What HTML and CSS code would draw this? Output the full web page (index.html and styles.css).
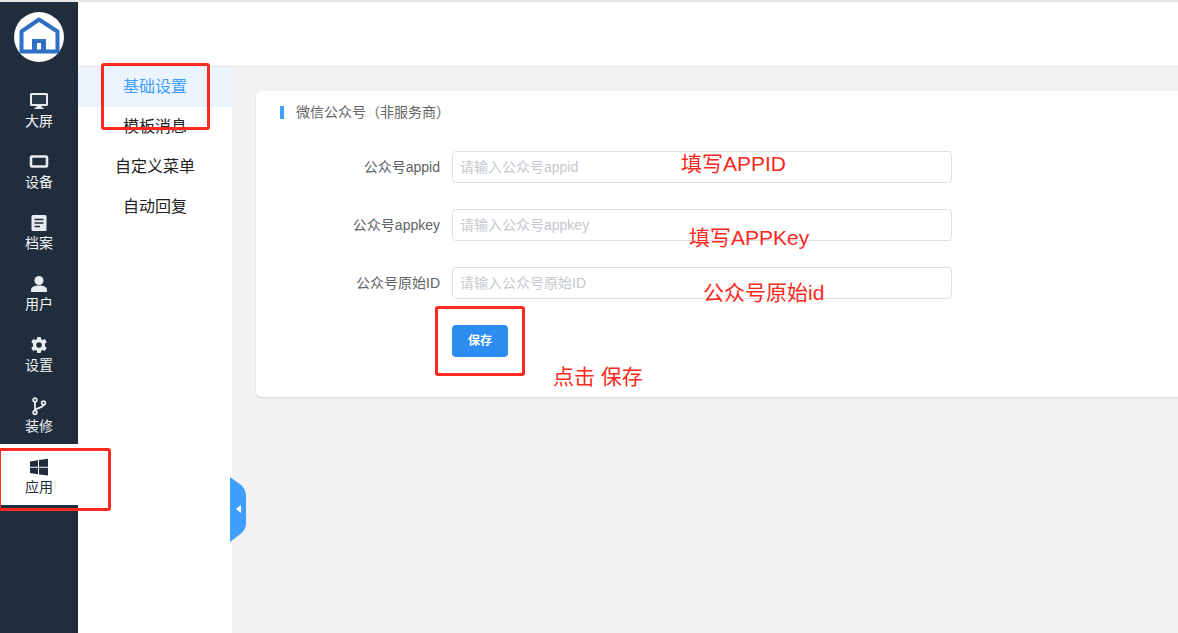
FILE: index.html
```html
<!DOCTYPE html>
<html lang="zh-CN">
<head>
<meta charset="utf-8">
<title>微信公众号</title>
<link rel="stylesheet" href="styles.css">
</head>
<body>
<div class="app">
  <aside class="rail">
    <div class="logo">
      <svg viewBox="0 0 50 50" width="50" height="50">
        <circle cx="25" cy="25" r="25" fill="#fff"/>
        <path d="M25 7.500 L43.500 19.500 V39.500 H7.500 V19.500 Z" fill="none" stroke="#2f6fc4" stroke-width="4" stroke-linejoin="round"/>
        <path d="M18 41 V27 H32 V41 H27 V31 H23 V41 Z" fill="#2f6fc4"/>
      </svg>
    </div>
    <a class="rail-item">
      <svg class="rail-icon" viewBox="0 0 20 20"><path d="M2.500 2 H17.500 A1.500 1.500 0 0 1 19 3.500 V13.500 A1.500 1.500 0 0 1 17.500 15 H2.500 A1.500 1.500 0 0 1 1 13.500 V3.500 A1.500 1.500 0 0 1 2.500 2 Z" fill="#e8ecf0"/><rect x="3" y="4" width="14" height="9" fill="#2b3a4b"/><path d="M7.500 15 H12.500 V16.500 H14.500 V18 H5.500 V16.500 H7.500 Z" fill="#e8ecf0"/></svg>
      <span>大屏</span>
    </a>
    <a class="rail-item">
      <svg class="rail-icon" viewBox="0 0 20 20"><rect x="2" y="4.500" width="16" height="10" rx="1" fill="none" stroke="#e8ecf0" stroke-width="2.600"/></svg>
      <span>设备</span>
    </a>
    <a class="rail-item">
      <svg class="rail-icon" viewBox="0 0 20 20"><rect x="2.500" y="2" width="15" height="16" rx="1.500" fill="#e8ecf0"/><path d="M5.500 6.500 H14.500 M5.500 10 H14.500 M5.500 13.500 H11" stroke="#1f2d3d" stroke-width="1.500"/></svg>
      <span>档案</span>
    </a>
    <a class="rail-item">
      <svg class="rail-icon" viewBox="0 0 20 20"><circle cx="10" cy="6.500" r="4.500" fill="#e8ecf0"/><path d="M2 18 V16 C2 13 5 11.500 10 11.500 C15 11.500 18 13 18 16 V18 Z" fill="#e8ecf0"/></svg>
      <span>用户</span>
    </a>
    <a class="rail-item">
      <svg class="rail-icon" viewBox="0 0 20 20"><path fill="#e8ecf0" fill-rule="evenodd" d="M8.300 2 H11.700 L12.200 4.300 L13.600 5 L15.800 4 L17.700 7 L16 8.700 V11.300 L17.700 13 L15.800 16 L13.600 15 L12.200 15.700 L11.700 18 H8.300 L7.800 15.700 L6.400 15 L4.200 16 L2.300 13 L4 11.300 V8.700 L2.300 7 L4.200 4 L6.400 5 L7.800 4.300 Z M10 7.200 A2.800 2.800 0 1 0 10 12.800 A2.800 2.800 0 1 0 10 7.200 Z"/></svg>
      <span>设置</span>
    </a>
    <a class="rail-item">
      <svg class="rail-icon" viewBox="0 0 20 20"><g fill="none" stroke="#e8ecf0" stroke-width="1.800"><circle cx="6" cy="4" r="1.800"/><circle cx="6" cy="16.500" r="1.800"/><circle cx="14.500" cy="7" r="1.800"/><path d="M6 5.800 V14.700 M14.500 8.800 C14.500 12 7.500 11 6 14.700"/></g></svg>
      <span>装修</span>
    </a>
    <a class="rail-item is-active">
      <svg class="rail-icon" viewBox="0 0 20 20"><path fill="#1f2d3d" d="M1 4.500 L9 3.300 V9.800 H1 Z M10 3.100 L19 1.800 V9.800 H10 Z M1 10.800 H9 V17.200 L1 16.100 Z M10 10.800 H19 V18.600 L10 17.400 Z"/></svg>
      <span>应用</span>
    </a>
  </aside>

  <div class="content">
    <header class="topbar"></header>
    <div class="below">
      <nav class="submenu">
        <a class="sub-item is-current">基础设置</a>
        <a class="sub-item">模板消息</a>
        <a class="sub-item">自定义菜单</a>
        <a class="sub-item">自动回复</a>
        <div class="collapse"><span class="collapse-arrow"></span></div>
      </nav>
      <main class="main">
        <section class="card">
          <h2 class="card-title">微信公众号（非服务商）</h2>
          <form class="form">
            <div class="row">
              <label class="label">公众号appid</label>
              <input class="input" placeholder="请输入公众号appid">
            </div>
            <div class="row">
              <label class="label">公众号appkey</label>
              <input class="input" placeholder="请输入公众号appkey">
            </div>
            <div class="row">
              <label class="label">公众号原始ID</label>
              <input class="input" placeholder="请输入公众号原始ID">
            </div>
            <div class="row">
              <button class="save" type="button">保存</button>
            </div>
          </form>
        </section>
      </main>
    </div>
  </div>
</div>

<div class="mark mark-menu"></div>
<div class="mark mark-app"></div>
<div class="mark mark-save"></div>
<div class="note note-appid">填写APPID</div>
<div class="note note-appkey">填写APPKey</div>
<div class="note note-origin">公众号原始id</div>
<div class="note note-save">点击 保存</div>
</body>
</html>
```

FILE: styles.css
```css
* { box-sizing: border-box; }
html, body { margin: 0; height: 100%; overflow: hidden; }
body {
  position: relative;
  font-family: "Liberation Sans", "Noto Sans CJK SC", sans-serif;
  color: #333;
  background: #f2f2f2;
}
.app {
  display: flex;
  height: 633px;
  border-top: 2px solid #e6e6e6;
}
.rail {
  width: 78px;
  flex: none;
  background: #1f2d3d;
  display: flex;
  flex-direction: column;
}
.logo {
  height: 76px;
  padding-top: 10px;
  display: flex;
  justify-content: center;
}
.rail-item {
  height: 61px;
  padding-top: 13px;
  display: flex;
  flex-direction: column;
  align-items: center;
  font-size: 14px;
  line-height: 20px;
  color: #f2f4f6;
}
.rail-icon { width: 20px; height: 20px; display: block; }
.rail-item.is-active { background: #fff; color: #1f2d3d; }
.content { flex: 1; min-width: 0; display: flex; flex-direction: column; }
.topbar { height: 65px; flex: none; background: #fff; border-bottom: 1px solid #e6e6e6; }
.below { flex: 1; display: flex; min-height: 0; }
.submenu { width: 154px; flex: none; background: #fff; position: relative; }
.sub-item {
  display: block;
  height: 40px;
  line-height: 40px;
  text-align: center;
  font-size: 16px;
  color: #222;
}
.sub-item.is-current { background: #ecf5ff; color: #409eff; }
.collapse {
  position: absolute;
  left: 152px;
  top: 410px;
  width: 16px;
  height: 65px;
  padding-bottom: 1px;
  background: #409eff;
  clip-path: polygon(0 0, 73% 13%, 90% 19%, 100% 27%, 100% 74%, 90% 81%, 73% 86%, 0 100%);
  display: flex;
  align-items: center;
  justify-content: center;
}
.collapse-arrow {
  width: 0;
  height: 0;
  border-top: 4px solid transparent;
  border-bottom: 4px solid transparent;
  border-right: 5px solid #fff;
}
.main { flex: 1; min-width: 0; padding: 24px 0 0 24px; }
.card {
  height: 306px;
  background: #fff;
  border-radius: 5px 0 0 5px;
  box-shadow: 0 1px 2px rgba(0, 0, 0, .14);
  padding: 15px 0 0 24px;
}
.card-title {
  margin: 0;
  font-size: 14px;
  font-weight: 400;
  line-height: 13px;
  height: 13px;
  color: #666;
  border-left: 4px solid #409eff;
  padding-left: 12px;
}
.form { margin-top: 32px; display: flex; flex-direction: column; gap: 26px; }
.row { display: flex; align-items: center; gap: 12px; height: 32px; }
.label { width: 160px; text-align: right; font-size: 14px; color: #606266; padding-bottom: 2px; }
.input {
  width: 500px;
  height: 32px;
  border: 1px solid #dcdfe6;
  border-radius: 4px;
  padding: 0 7px;
  font: 14px "Liberation Sans", "Noto Sans CJK SC", sans-serif;
  color: #606266;
  background: #fff;
  outline: none;
}
.input::placeholder { color: #c5c8ce; opacity: 1; }
.save {
  margin-left: 172px;
  width: 56px;
  height: 32px;
  border: 0;
  border-radius: 4px;
  background: #2d8cf0;
  color: #fff;
  font: 700 12px "Liberation Sans", "Noto Sans CJK SC", sans-serif;
  padding: 0 0 3px;
}
.mark {
  position: absolute;
  border: 3px solid #fb2a20;
  border-radius: 3px;
}
.mark-menu { left: 101px; top: 63px; width: 109px; height: 67px; }
.mark-app { left: -2px; top: 448px; width: 113px; height: 63px; }
.mark-save { left: 435px; top: 306px; width: 90px; height: 70px; }
.note {
  position: absolute;
  font-size: 21px;
  line-height: 28px;
  color: #fb2a20;
  white-space: nowrap;
  font-family: "Liberation Sans", "Noto Sans CJK SC", sans-serif;
}
.note-appid { left: 681px; top: 150px; }
.note-appkey { left: 689px; top: 224px; }
.note-origin { left: 703px; top: 279px; }
.note-save { left: 553px; top: 363px; }
```
